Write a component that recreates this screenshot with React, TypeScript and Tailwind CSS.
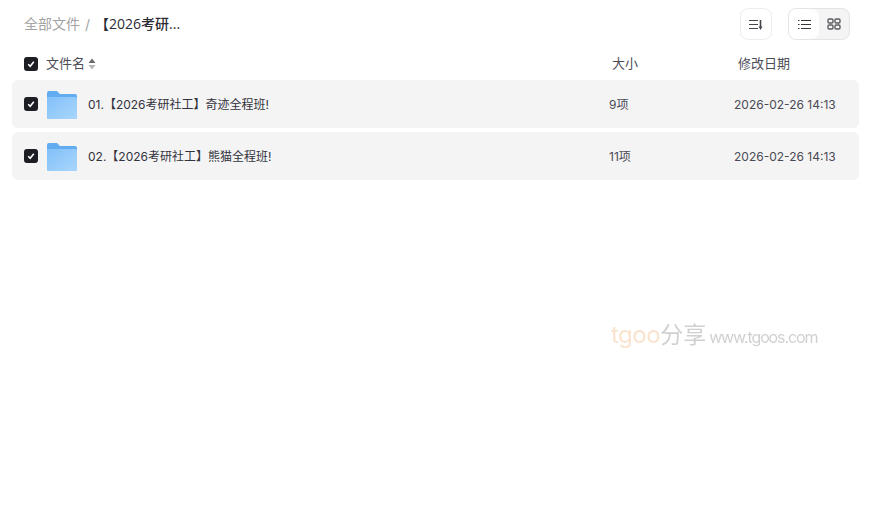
import React from "react";

const cjk = "font-['Inter','Noto_Sans_CJK_SC',sans-serif]";

const files = [
  { id: 1, name: "01.【2026考研社工】奇迹全程班!", size: "9项" },
  { id: 2, name: "02.【2026考研社工】熊猫全程班!", size: "11项" },
];

const Check = () => (
  <span className="flex h-[14px] w-[14px] shrink-0 items-center justify-center rounded-[3px] bg-[#1d1d24]">
    <svg width="8" height="8" viewBox="0 0 8 8" fill="none">
      <path d="M1.2 4.2 L3.2 6.2 L6.8 1.8" stroke="#fff" strokeWidth="1.6" />
    </svg>
  </span>
);

const Folder = () => (
  <svg width="30" height="28" viewBox="0 0 30 28" className="block shrink-0">
    <defs>
      <linearGradient id="fold" x1="0" y1="0" x2="1" y2="1">
        <stop offset="0" stopColor="#82c0f8" />
        <stop offset="1" stopColor="#a9d6fd" />
      </linearGradient>
    </defs>
    <path d="M0 2a2 2 0 0 1 2-2h8l3 3h15a2 2 0 0 1 2 2v4H0z" fill="#62adf1" />
    <path d="M0 6h28a2 2 0 0 1 2 2v20H1a1 1 0 0 1-1-1z" fill="url(#fold)" />
  </svg>
);

export default function App() {
  return (
    <div className={`h-[514px] w-[874px] overflow-hidden bg-white ${cjk}`}>
      <div className="flex h-[48px] items-center pl-[24px] pr-[24px]">
        <span className="mt-[-2px] text-[14px] text-[#a3a3a3]">全部文件</span>
        <span className="ml-[5px] text-[14px] text-[#a3a3a3]">/</span>
        <span className="ml-[5px] mt-[-2px] font-['Open_Sans','Noto_Sans_CJK_SC',sans-serif] text-[14px] font-medium text-[#2b2b33]">【2026考研...</span>
        <div className="ml-auto flex items-center gap-[16px]">
          <button className="flex h-[32px] w-[32px] items-center justify-center rounded-[8px] border border-[#ececec] bg-white">
            <svg width="14" height="11" viewBox="0 0 14 11" fill="none" stroke="#45454d" strokeWidth="1.2">
              <path d="M0 1.5h9M0 5.5h9M0 9.5h9" />
              <path d="M11.5 1v7" strokeWidth="1.6" />
              <path d="M9.5 7.5h4L11.5 11z" fill="#45454d" stroke="none" />
            </svg>
          </button>
          <div className="flex h-[32px] w-[62px] rounded-[8px] border border-[#e4e4e4] bg-[#f4f4f4]">
            <span className="flex w-[30px] items-center justify-center rounded-[7px] bg-white">
              <svg width="13" height="9" viewBox="0 0 13 9" fill="none" stroke="#35353d">
                <path d="M3 .5h10M3 4.5h10M3 8.5h10" />
                <path d="M0 .5h1.5M0 4.5h1.5M0 8.5h1.5" />
              </svg>
            </span>
            <span className="flex flex-1 items-center justify-center">
              <svg width="14" height="12" viewBox="0 0 14 12" fill="none" stroke="#5a5a60" strokeWidth="1.4">
                <rect x="1" y="1" width="5" height="4" rx="1.2" />
                <rect x="8" y="1" width="5" height="4" rx="1.2" />
                <rect x="1" y="7" width="5" height="4" rx="1.2" />
                <rect x="8" y="7" width="5" height="4" rx="1.2" />
              </svg>
            </span>
          </div>
        </div>
      </div>

      <div className="flex h-[32px] items-center pl-[24px] text-[13px] text-[#4d4d58]">
        <Check />
        <span className="ml-[8px]">文件名</span>
        <svg width="8" height="12" viewBox="0 0 8 12" className="ml-[3px]">
          <path d="M4 .5 7.5 5h-7z" fill="#6a6a6a" />
          <path d="M4 11.5 .5 7h7z" fill="#b5b5b5" />
        </svg>
        <span className="ml-[516px] w-[126px]">大小</span>
        <span>修改日期</span>
      </div>

      <div className="ml-[12px] flex w-[847px] flex-col gap-[4px]">
        {files.map((file) => (
          <div key={file.id} className="flex h-[48px] items-center rounded-[6px] bg-[#f4f4f4] pl-[12px] text-[12px] text-[#4a4a55]">
            <Check />
            <span className="ml-[9px] mt-[2px]"><Folder /></span>
            <span className="ml-[11px] mt-[2px] w-[521px] text-[#33333d]">{file.name}</span>
            <span className="mt-[2px] w-[125px]">{file.size}</span>
            <span className="mt-[2px]">2026-02-26 14:13</span>
          </div>
        ))}
      </div>

      <div className="ml-[611px] mt-[140px] flex w-[220px] items-end opacity-50 blur-[0.4px]">
        <span className="text-[24px] leading-[30px] tracking-[-0.5px] text-[#f7c9a0]">tgoo</span>
        <span className="text-[23px] leading-[30px] text-[#a3a3a3]">分享</span>
        <span className="ml-[3px] text-[16px] leading-[26px] tracking-[-1.1px] text-[#a3a3a3]">www.tgoos.com</span>
      </div>
    </div>
  );
}
